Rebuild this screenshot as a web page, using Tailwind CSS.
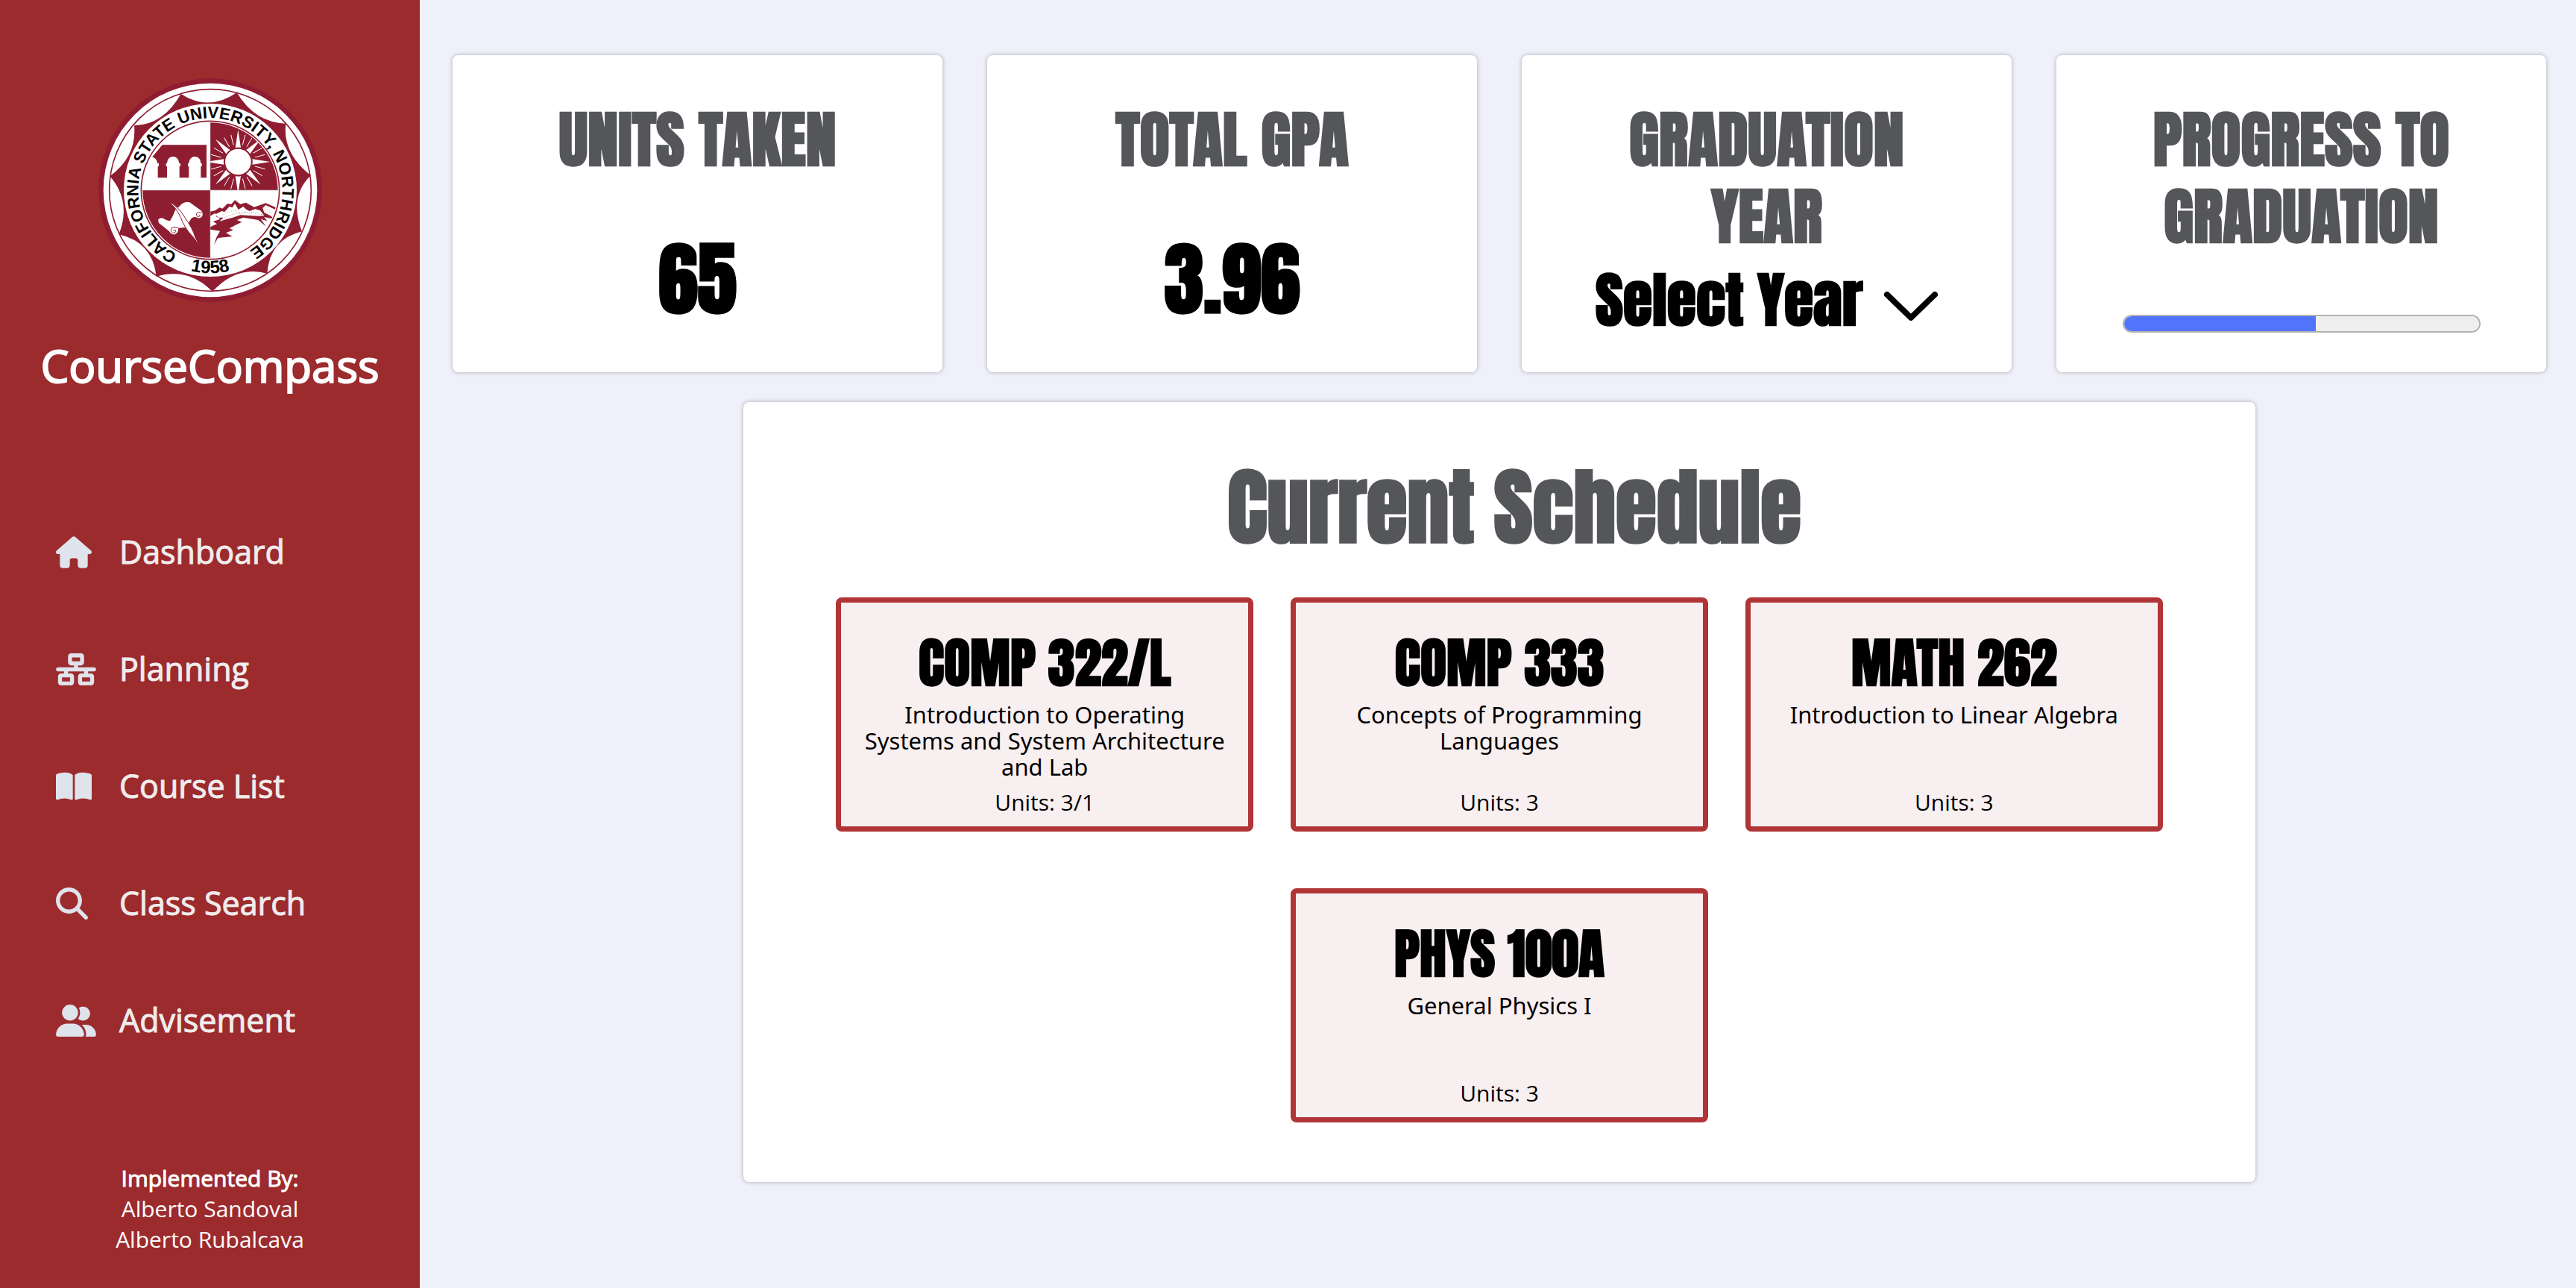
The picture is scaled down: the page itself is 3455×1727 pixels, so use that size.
<!DOCTYPE html>
<html lang="en">
<head>
<meta charset="utf-8">
<meta name="viewport" content="width=device-width, initial-scale=1">
<title>CourseCompass</title>
<script src="https://cdn.jsdelivr.net/npm/@tailwindcss/browser@4"></script>
</head>
<body class="flex min-h-screen bg-[#f0f0fa] font-['Open_Sans',sans-serif] text-black">

<aside class="flex w-[563px] shrink-0 flex-col bg-[#9c2b2e] text-white">
  <svg class="mt-[105px] size-[300px] self-center" viewBox="33 46 900 900" role="img" aria-label="California State University, Northridge seal">
    <defs>
      <path id="ring-top" d="M351 754 A290 290 0 1 1 630 746"/>
      <path id="ring-bottom" d="M250 735 A333 333 0 0 0 716 735"/>
      <clipPath id="disc"><circle cx="483" cy="496" r="272"/></clipPath>
    </defs>
    <circle cx="483" cy="496" r="450" fill="#8f1d32"/>
    <circle cx="483" cy="496" r="430" fill="#fff"/>
    <circle cx="483" cy="496" r="406" fill="none" stroke="#8f1d32" stroke-width="5"/>
    <path fill="#8f1d32" d="M365 108Q475 182 590 103Q662 224 787 228Q772 346 887 437Q798 524 852 662Q722 694 712 831Q590 797 492 904Q398 806 266 843Q250 704 115 674Q168 542 79 440Q188 360 177 236Q296 232 365 108Z"/>
    <circle cx="483" cy="496" r="348" fill="#fff"/>
    <circle cx="483" cy="496" r="278" fill="none" stroke="#8f1d32" stroke-width="5"/>
    <g clip-path="url(#disc)">
      <path fill="#8f1d32" d="M483 200h300v296H483zM200 496h283v300H200z"/>
      <path fill="#8f1d32" d="M290 314H468V446H445V400H449V388H445C444 370 434 361 421 361S399 370 397 388H393V400H397V446H359V400H363V388H358C356 370 346 361 333 361S311 370 309 388H305V400H309V446H272V400H276V388H271C268 374 262 367 250 362Z"/>
      <g fill="#fff">
        <circle cx="595" cy="382" r="52"/>
        <g id="ray"><path d="M584 325L595 253L606 325Q595 322 584 325Z"/></g>
        <use href="#ray" transform="rotate(45 595 382)"/>
        <use href="#ray" transform="rotate(90 595 382)"/>
        <use href="#ray" transform="rotate(135 595 382)"/>
        <use href="#ray" transform="rotate(180 595 382)"/>
        <use href="#ray" transform="rotate(225 595 382)"/>
        <use href="#ray" transform="rotate(270 595 382)"/>
        <use href="#ray" transform="rotate(315 595 382)"/>
      </g>
      <g stroke="#fff" stroke-width="3">
        <g id="thin"><path d="M613 314L624 273M630 321L651 285"/></g>
        <use href="#thin" transform="rotate(45 595 382)"/>
        <use href="#thin" transform="rotate(90 595 382)"/>
        <use href="#thin" transform="rotate(135 595 382)"/>
        <use href="#thin" transform="rotate(180 595 382)"/>
        <use href="#thin" transform="rotate(225 595 382)"/>
        <use href="#thin" transform="rotate(270 595 382)"/>
        <use href="#thin" transform="rotate(315 595 382)"/>
      </g>
      <path fill="#fff" d="M273 616Q280 604 295 610Q312 622 322 618Q334 600 342 576L358 562Q378 538 400 545L446 578Q456 590 450 602Q442 612 430 606Q414 600 404 614Q394 632 384 646L354 648Q356 668 340 674Q326 676 318 662Q300 646 276 628Z"/>
      <path fill="none" stroke="#8f1d32" stroke-width="3" d="M354 648Q338 640 328 648Q320 660 332 668Q346 668 344 658Q338 652 334 660M448 588Q436 580 427 590Q426 602 438 603Q446 598 438 594"/>
      <path fill="#fff" stroke="#8f1d32" stroke-width="3" d="M315 542Q352 558 380 604Q412 650 422 684L440 720L414 684Q380 650 364 606Q348 568 315 542Z"/>
      <path fill="#8f1d32" d="M483 582L502 578L520 566L532 570L552 550L568 552L582 536L604 552L626 546L660 564L706 548L758 570V580L706 556L694 568L700 586L728 600L740 612L700 604L712 620L686 612L708 642L676 616L640 610L616 606L590 616L610 624L582 638L560 650L576 656L546 668L572 682L536 686L514 688L498 716L508 686L522 660L483 654V644L510 632L494 622L524 612L504 600L526 596L500 590L483 600Z"/>
      <path fill="#fff" d="M506 592L530 580L540 584L560 562L572 566L582 550L596 574L616 562L628 574L642 580L664 572L684 578L700 598L682 600L640 598L604 596L574 606L550 612L520 622L536 606L514 606ZM698 566L712 560L740 574L738 594L708 588Z"/>
      <path fill="none" stroke="#8f1d32" stroke-width="2" stroke-dasharray="2 6" d="M530 596L580 576L600 590L670 584M540 606L576 592L630 584L690 594M704 572L736 582M706 580L734 590"/>
    </g>
    <path stroke="#b8b0b4" stroke-width="2" d="M210 496H756M483 224V770"/>
    <g class="font-['Liberation_Sans',sans-serif] font-bold" fill="#000">
      <text font-size="66"><textPath href="#ring-top">CALIFORNIA STATE UNIVERSITY, NORTHRIDGE</textPath></text>
      <text font-size="72" text-anchor="middle"><textPath href="#ring-bottom" startOffset="50%">1958</textPath></text>
    </g>
  </svg>

  <h1 class="mt-[44px] text-center text-[60px] leading-[82px] [-webkit-text-stroke:2px_#fff]">CourseCompass</h1>

  <nav class="mt-[179px] pl-[75px]">
    <ul class="flex flex-col gap-[97px] text-[43px] leading-[60px] text-[#f0ecec] [-webkit-text-stroke:1px_#f0ecec]">
      <li><a href="#dashboard" class="flex items-center"><span class="w-[85px]"><svg class="h-[43px] w-[48px] fill-[#dfe3eb]" viewBox="0 0 576 512"><path d="M267 8Q288 -8 309 8L565 228Q582 246 573 268Q563 287 544 287H512V464Q512 512 464 512H400Q352 512 352 464V392Q352 352 320 352H256Q224 352 224 392V464Q224 512 176 512H112Q64 512 64 464V287H32Q13 287 3 268Q-6 246 11 228Z"/></svg></span>Dashboard</a></li>
      <li><a href="#planning" class="flex items-center"><span class="w-[85px]"><svg class="h-[43px] w-[54px] fill-[#dfe3eb]" viewBox="0 0 640 512"><path d="M256 64H384v64H256V64z M240 0c-26.5 0-48 21.5-48 48v96c0 26.5 21.5 48 48 48h48v32H32c-17.7 0-32 14.3-32 32s14.3 32 32 32h96v32H80c-26.5 0-48 21.5-48 48v96c0 26.5 21.5 48 48 48H240c26.5 0 48-21.5 48-48V368c0-26.5-21.5-48-48-48H192V288H448v32H400c-26.5 0-48 21.5-48 48v96c0 26.5 21.5 48 48 48H560c26.5 0 48-21.5 48-48V368c0-26.5-21.5-48-48-48H512V288h96c17.7 0 32-14.3 32-32s-14.3-32-32-32H352V192h48c26.5 0 48-21.5 48-48V48c0-26.5-21.5-48-48-48H240z M96 448V384H224v64H96z M416 384H544v64H416V384z" fill-rule="evenodd"/></svg></span>Planning</a></li>
      <li><a href="#course-list" class="flex items-center"><span class="w-[85px]"><svg class="h-[43px] w-[48px] fill-[#dfe3eb]" viewBox="0 0 576 512"><path d="M249.600 471.500c10.800 3.800 22.400-4.100 22.400-15.500V78.600c0-4.200-1.600-8.400-5-11C247.400 52 202.400 32 144 32C93.500 32 46.300 45.300 18.100 56.100C6.800 60.500 0 71.700 0 83.800V454.100c0 11.900 12.800 20.200 24.100 16.500C55.600 460.100 105.500 448 144 448c33.900 0 79 14 105.600 23.500zm76.800 0C353 462 398.100 448 432 448c38.500 0 88.400 12.100 119.900 22.600c11.300 3.800 24.100-4.600 24.100-16.500V83.800c0-12.100-6.800-23.300-18.100-27.600C529.700 45.300 482.500 32 432 32c-58.400 0-103.400 20-123 35.600c-3.300 2.600-5 6.800-5 11V456c0 11.400 11.700 19.300 22.400 15.500z"/></svg></span>Course List</a></li>
      <li><a href="#class-search" class="flex items-center"><span class="w-[85px]"><svg class="size-[43px] fill-[#dfe3eb]" viewBox="0 0 512 512"><path d="M416 208c0 45.900-14.900 88.300-40 122.700L502.600 457.400c12.500 12.500 12.500 32.800 0 45.300s-32.800 12.500-45.300 0L330.700 376c-34.400 25.200-76.800 40-122.700 40C93.100 416 0 322.900 0 208S93.100 0 208 0S416 93.100 416 208zM208 352a144 144 0 1 0 0-288 144 144 0 1 0 0 288z"/></svg></span>Class Search</a></li>
      <li><a href="#advisement" class="flex items-center"><span class="w-[85px]"><svg class="h-[43px] w-[54px] fill-[#dfe3eb]" viewBox="0 0 640 512"><path d="M96 128a128 128 0 1 1 256 0A128 128 0 1 1 96 128zM0 482.300C0 383.800 79.800 304 178.300 304h91.400C368.200 304 448 383.800 448 482.300c0 16.400-13.300 29.700-29.700 29.700H29.700C13.300 512 0 498.700 0 482.300zM609.300 512H471.400c5.400-9.400 8.600-20.300 8.600-32v-8c0-60.700-27.100-115.200-69.800-151.800c2.400-.1 4.700-.2 7.100-.2h61.400C567.800 320 640 392.200 640 481.300c0 17-13.800 30.700-30.700 30.700zM432 256c-31 0-59-12.600-79.300-32.900C372.400 196.500 384 163.600 384 128c0-26.800-6.600-52.100-18.300-74.300C384.300 40.100 407.200 32 432 32c61.900 0 112 50.100 112 112s-50.100 112-112 112z"/></svg></span>Advisement</a></li>
    </ul>
  </nav>

  <footer class="mt-auto pb-[45px] text-center text-[30px] leading-[41px]">
    <p class="[-webkit-text-stroke:1px_#fff]">Implemented By:</p>
    <p>Alberto Sandoval</p>
    <p>Alberto Rubalcava</p>
  </footer>
</aside>

<main class="flex min-w-0 flex-1 flex-col items-center gap-10 pt-[74px] pr-10 pb-10 pl-11">
  <section class="grid w-full grid-cols-4 gap-[60px] text-center font-['Anton','Roboto_Condensed',sans-serif] font-bold">
    <article class="min-h-[425px] rounded-lg bg-white px-10 pt-[62px] shadow-[0_0_5px_1px_#bdbdc8]">
      <h2 class="text-[82px] leading-[103px] text-[#55565a]">UNITS TAKEN</h2>
      <p class="mt-[75px] text-[106px] leading-[120px]">65</p>
    </article>
    <article class="min-h-[425px] rounded-lg bg-white px-10 pt-[62px] shadow-[0_0_5px_1px_#bdbdc8]">
      <h2 class="text-[82px] leading-[103px] text-[#55565a]">TOTAL GPA</h2>
      <p class="mt-[75px] text-[106px] leading-[120px]">3.96</p>
    </article>
    <article class="min-h-[425px] rounded-lg bg-white px-10 pt-[62px] shadow-[0_0_5px_1px_#bdbdc8]">
      <h2 class="text-[82px] leading-[103px] text-[#55565a]"><label for="year">GRADUATION<br>YEAR</label></h2>
      <div class="mt-[9px] flex items-center justify-center">
        <div class="relative">
          <select id="year" class="h-[103px] appearance-none bg-transparent pr-[100px] text-[80px] leading-[103px]"><option>Select Year</option></select>
          <svg class="pointer-events-none absolute top-[40px] right-0 h-[40px] w-[72px]" viewBox="0 0 72 40" fill="none" stroke="#000" stroke-width="8" stroke-linecap="round" stroke-linejoin="round"><path d="M4 4L36 35L68 4"/></svg>
        </div>
      </div>
    </article>
    <article class="min-h-[425px] rounded-lg bg-white px-10 pt-[62px] shadow-[0_0_5px_1px_#bdbdc8]">
      <h2 id="progress-title" class="text-[82px] leading-[103px] text-[#55565a]">PROGRESS TO<br>GRADUATION</h2>
      <progress value="54" max="100" aria-labelledby="progress-title" class="mx-auto mt-[80px] block h-[24px] w-[480px] appearance-none overflow-hidden rounded-full border-2 border-[#b2b2b2] bg-[#efefef] [&::-webkit-progress-bar]:bg-[#efefef] [&::-webkit-progress-value]:bg-[#5174fa]"></progress>
    </article>
  </section>

  <section class="w-[72.2%] min-h-[1046px] rounded-lg bg-white px-[124px] pt-[71px] pb-20 text-center shadow-[0_0_5px_1px_#bdbdc8]">
    <h2 class="pl-10 font-['Anton','Roboto_Condensed',sans-serif] text-[112px] leading-[140px] font-bold text-[#55565a]">Current Schedule</h2>
    <div class="mt-[51px] grid grid-cols-3 gap-x-[50px] gap-y-[76px] text-[30px] leading-[35px]">
      <article class="flex min-h-[314px] flex-col rounded-lg border-[7px] border-[#b13437] bg-[#f8eff0] px-3 pt-[41px] pb-[15px]">
        <h3 class="font-['Anton','Roboto_Condensed',sans-serif] text-[72px] leading-[80px] font-bold">COMP 322/L</h3>
        <p class="mt-3 font-['Noto_Sans',sans-serif] text-[31px] leading-[35px]">Introduction to Operating<br>Systems and System Architecture<br>and Lab</p>
        <p class="mt-auto">Units: 3/1</p>
      </article>
      <article class="flex min-h-[314px] flex-col rounded-lg border-[7px] border-[#b13437] bg-[#f8eff0] px-3 pt-[41px] pb-[15px]">
        <h3 class="font-['Anton','Roboto_Condensed',sans-serif] text-[72px] leading-[80px] font-bold">COMP 333</h3>
        <p class="mt-3 font-['Noto_Sans',sans-serif] text-[31px] leading-[35px]">Concepts of Programming<br>Languages</p>
        <p class="mt-auto">Units: 3</p>
      </article>
      <article class="flex min-h-[314px] flex-col rounded-lg border-[7px] border-[#b13437] bg-[#f8eff0] px-3 pt-[41px] pb-[15px]">
        <h3 class="font-['Anton','Roboto_Condensed',sans-serif] text-[72px] leading-[80px] font-bold">MATH 262</h3>
        <p class="mt-3 font-['Noto_Sans',sans-serif] text-[31px] leading-[35px]">Introduction to Linear Algebra</p>
        <p class="mt-auto">Units: 3</p>
      </article>
      <article class="col-start-2 flex min-h-[314px] flex-col rounded-lg border-[7px] border-[#b13437] bg-[#f8eff0] px-3 pt-[41px] pb-[15px]">
        <h3 class="font-['Anton','Roboto_Condensed',sans-serif] text-[72px] leading-[80px] font-bold">PHYS 100A</h3>
        <p class="mt-3 font-['Noto_Sans',sans-serif] text-[31px] leading-[35px]">General Physics I</p>
        <p class="mt-auto">Units: 3</p>
      </article>
    </div>
  </section>
</main>
</body>
</html>
